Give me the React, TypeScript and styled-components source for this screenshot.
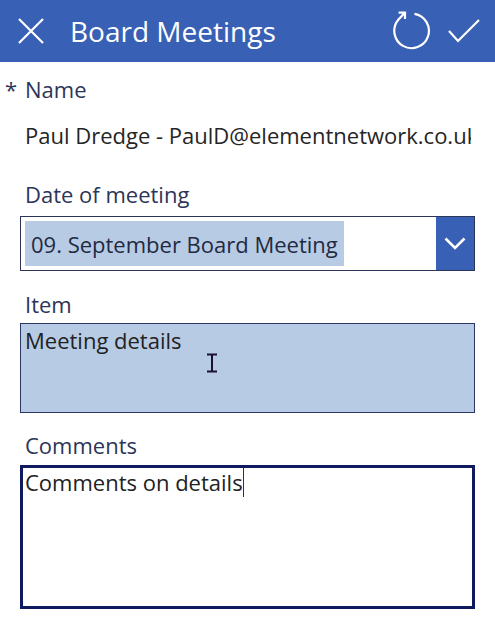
import React from 'react';
import styled, { createGlobalStyle } from 'styled-components';

const GlobalStyle = createGlobalStyle`
  body { margin: 0; background: #ffffff; font-family: "Open Sans", "Noto Sans", sans-serif; }
`;

const BLUE = '#3860b4';
const NAVY = '#2c3558';
const SELECT = '#b8cbe5';

const Screen = styled.div`
  width: 495px;
  height: 640px;
  overflow: hidden;
  background: #fff;
`;

const Header = styled.header`
  height: 62px;
  background: ${BLUE};
  display: flex;
  align-items: center;
  padding: 0 14px 0 16px;
  box-sizing: border-box;
  color: #fff;
`;

const IconButton = styled.div<{ $size: number }>`
  width: ${p => p.$size}px;
  height: ${p => p.$size}px;
  display: flex;
  align-items: center;
  justify-content: center;
  flex-shrink: 0;
`;

const Title = styled.h1`
  margin: 0 0 0 24px;
  font-size: 28px;
  font-weight: 400;
  flex: 1;
  white-space: nowrap;
`;

const Actions = styled.div`
  display: flex;
  align-items: center;
  gap: 15px;
`;

const Form = styled.div`
  padding: 13px 20px 0 20px;
  display: flex;
  flex-direction: column;
`;

const Field = styled.div<{ $gap: number }>`
  display: flex;
  flex-direction: column;
  margin-bottom: ${p => p.$gap}px;
`;

const Label = styled.div<{ $space: number }>`
  position: relative;
  font-size: 22px;
  line-height: 28px;
  color: ${NAVY};
  padding-left: 5px;
  margin-bottom: ${p => p.$space}px;
`;

const Required = styled.span`
  position: absolute;
  left: -15px;
  top: 0;
`;

// the reference clips the long name at the field's right edge
const Value = styled.div`
  font-size: 22px;
  line-height: 28px;
  color: #252525;
  padding: 12px 0 0 5px;
  white-space: nowrap;
  overflow: hidden;
  width: 446px;
`;

const Dropdown = styled.div`
  height: 55px;
  border: 1px solid ${NAVY};
  box-sizing: border-box;
  display: flex;
  align-items: stretch;
  padding: 4px 0 4px 4px;
  background: #fff;
`;

const SelectedText = styled.div`
  background: ${SELECT};
  font-size: 22px;
  color: #222a40;
  padding: 0 6px;
  display: flex;
  align-items: center;
  white-space: nowrap;
`;

const Spacer = styled.div`
  flex: 1;
`;

const ChevronButton = styled.div`
  width: 38px;
  margin: -4px 0 -4px 0;
  background: ${BLUE};
  display: flex;
  align-items: center;
  justify-content: center;
`;

const TextBox = styled.div<{ $height: number; $focused?: boolean }>`
  position: relative;
  height: ${p => p.$height}px;
  box-sizing: border-box;
  border: ${p => (p.$focused ? '3px solid #0f1b5e' : '1px solid #2b3663')};
  background: ${p => (p.$focused ? '#fff' : SELECT)};
  padding: ${p => (p.$focused ? '0 2px' : '2px 4px')};
  font-size: 22px;
  line-height: 28px;
  color: #222;
`;

const Caret = styled.span`
  display: inline-block;
  width: 1px;
  height: 29px;
  background: #333;
  vertical-align: top;
`;

const IBeam = styled.svg`
  position: absolute;
  left: 185px;
  top: 29px;
`;

function CloseIcon() {
  return (
    <svg width="28" height="28" viewBox="0 0 28 28">
      <path d="M2 2 L26 26 M26 2 L2 26" stroke="#fff" strokeWidth="2.2" fill="none" />
    </svg>
  );
}

function RefreshIcon() {
  return (
    <svg width="40" height="40" viewBox="0 0 40 40">
      <path
        d="M22.5 2.8 A17.3 17.3 0 1 1 6.3 8.8 L13 1.6"
        stroke="#fff"
        strokeWidth="2.2"
        fill="none"
        strokeLinejoin="round"
      />
      <path d="M6.6 1.6 H13 V8" stroke="#fff" strokeWidth="2.2" fill="none" />
    </svg>
  );
}

function CheckIcon() {
  return (
    <svg width="34" height="28" viewBox="0 0 34 28">
      <path d="M2 14 L11 24 L32 3" stroke="#fff" strokeWidth="2.2" fill="none" />
    </svg>
  );
}

function ChevronIcon() {
  return (
    <svg width="22" height="13" viewBox="0 0 22 13">
      <path d="M1.5 1.5 L11 11 L20.5 1.5" stroke="#fff" strokeWidth="2.6" fill="none" />
    </svg>
  );
}

export default function App() {
  return (
    <Screen>
      <GlobalStyle />
      <Header>
        <IconButton $size={30}>
          <CloseIcon />
        </IconButton>
        <Title>Board Meetings</Title>
        <Actions>
          <RefreshIcon />
          <CheckIcon />
        </Actions>
      </Header>

      <Form>
        <Field $gap={31}>
          <Label $space={6}>
            <Required>*</Required>
            Name
          </Label>
          <Value>Paul Dredge - PaulD@elementnetwork.co.uk</Value>
        </Field>

        <Field $gap={19}>
          <Label $space={8}>Date of meeting</Label>
          <Dropdown>
            <SelectedText>09. September Board Meeting</SelectedText>
            <Spacer />
            <ChevronButton>
              <ChevronIcon />
            </ChevronButton>
          </Dropdown>
        </Field>

        <Field $gap={18}>
          <Label $space={5}>Item</Label>
          <TextBox $height={90}>
            Meeting details
            <IBeam width="12" height="20" viewBox="0 0 12 20">
              <path d="M1 1.5 H11 M6 1.5 V18.5 M1 18.5 H11" stroke="#1a1030" strokeWidth="2" fill="none" />
            </IBeam>
          </TextBox>
        </Field>

        <Field $gap={0}>
          <Label $space={6}>Comments</Label>
          <TextBox $height={144} $focused>
            Comments on details
            <Caret />
          </TextBox>
        </Field>
      </Form>
    </Screen>
  );
}
